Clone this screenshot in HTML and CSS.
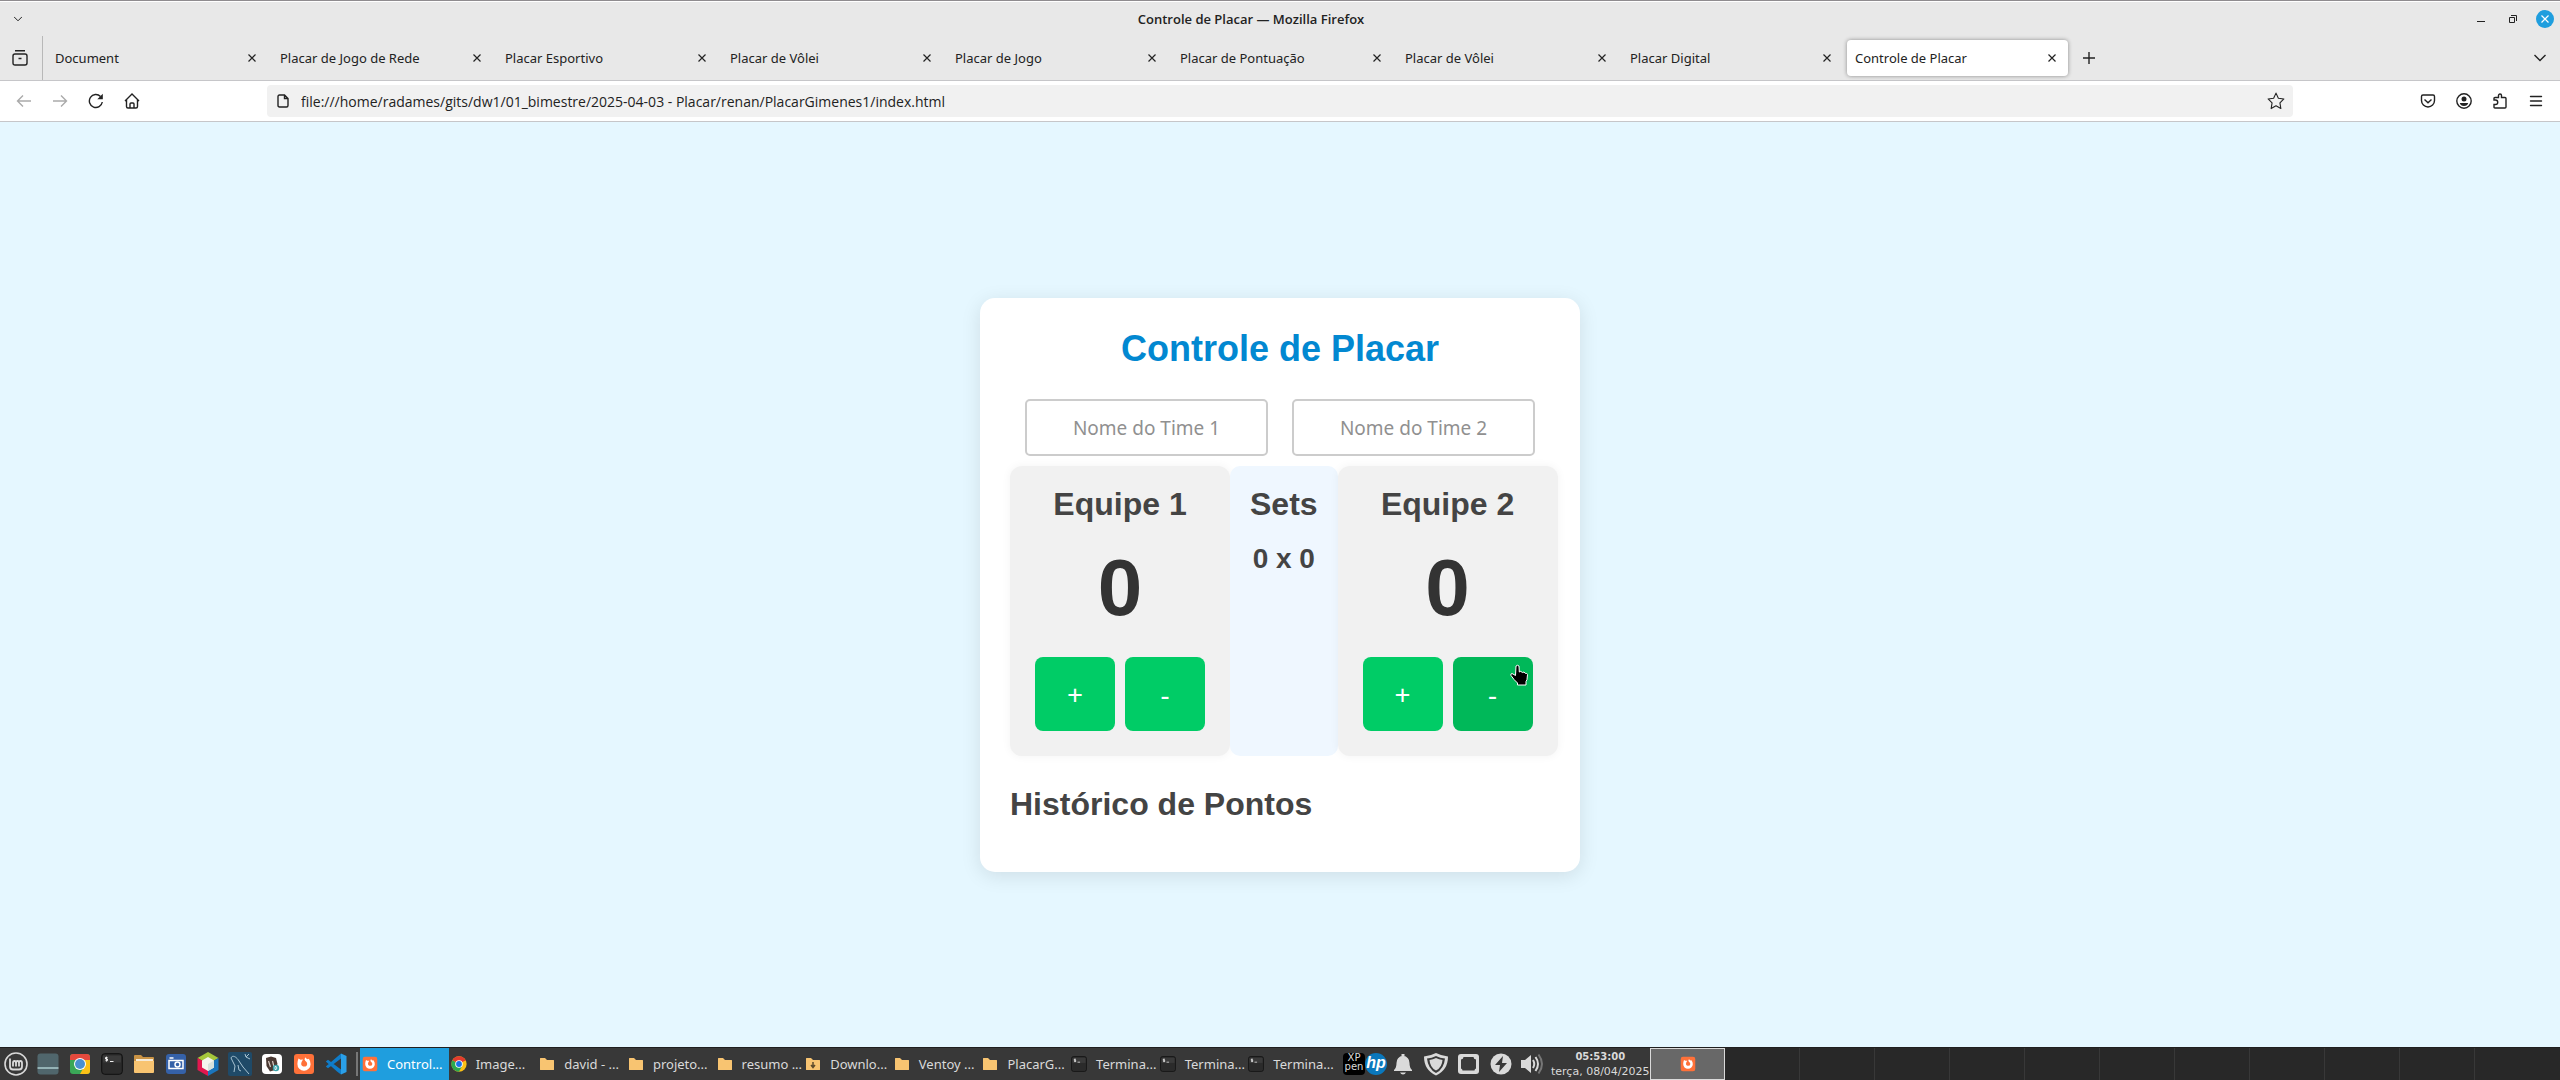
FILE: index.html
```
<!DOCTYPE html>
<html lang="pt-BR">
<head>
<meta charset="utf-8">
<title>Controle de Placar</title>
<link rel="stylesheet" href="styles.css">
</head>
<body>
<svg class="sprite" aria-hidden="true">
  <symbol id="x" viewBox="0 0 8 8"><path d="M.5.5l7 7M7.500.5l-7 7" fill="none" stroke="currentColor" stroke-width="1.200"/></symbol>
  <symbol id="folder" viewBox="0 0 16 16"><path d="M1 2.500q0-.5.5-.5H6l2 2h6.500q.5 0 .5.500v9q0 .5-.5.500h-13q-.5 0-.5-.5z" fill="#f8c471"/></symbol>
  <symbol id="term" viewBox="0 0 22 22"><rect x=".7" y=".7" width="20.600" height="20.600" rx="3" fill="#2b2b2b" stroke="#101010"/><path d="M2 2.500h18v7H2z" fill="#3a3a3a"/><path d="M6.500 4.500H4.500v1.500h2v1.600h-2M5.500 3.700v4.800M9 8.500h3.500" stroke="#eee" fill="none"/></symbol>
  <symbol id="fox" viewBox="0 0 22 22"><rect x="1" y="1" width="20" height="20" rx="3" fill="#ff7139"/><path d="M5.500 5.500l2 1.200 2.500-.2L8.600 9q-1.300 3.500 1.600 4.500 3.800.5 4-2.500 0-2-2-3.200-1.500-1.500.2-3.600.5 1.500 2.400 2l1-.5q2 2.500 1.800 5.500A6.600 6.600 0 0 1 4.400 11q0-3 1.100-5.500z" fill="#fff"/></symbol>
  <symbol id="chrome" viewBox="0 0 22 22"><circle cx="11" cy="11" r="10.500" fill="#fbc116"/><path d="M11 11L1.900 5.700A10.500 10.500 0 0 1 20.100 5.700z" fill="#e33b2e"/><path d="M11 11L1.900 5.700A10.500 10.500 0 0 0 11 21.500l4.500-8z" fill="#2da94f"/><path d="M11 6h9.200" stroke="#e33b2e" stroke-width="1"/><circle cx="11" cy="11" r="5.200" fill="#fff"/><circle cx="11" cy="11" r="4" fill="#1a73e8"/></symbol>
</svg>

<header class="titlebar">
  <button class="icon-btn" aria-label="Menu da janela"><svg width="8" height="6" viewBox="0 0 8 6"><path d="M0 .8l4 4 4-4" class="ln"/></svg></button>
  <span class="window-title">Controle de Placar — Mozilla Firefox</span>
  <span class="window-controls">
    <button class="icon-btn" aria-label="Minimizar"><svg width="8" height="12" viewBox="0 0 8 12"><path d="M0 8.500h8" class="ln"/></svg></button>
    <button class="icon-btn" aria-label="Restaurar"><svg width="8" height="8" viewBox="0 0 8 8"><path d="M.5 2.500h5v5h-5zM2 .5h5.500V6" class="ln"/></svg></button>
    <button class="icon-btn close" aria-label="Fechar"><svg width="8" height="8"><use href="#x"/></svg></button>
  </span>
</header>

<nav class="tabs" aria-label="Abas">
  <button class="icon-btn shelf" aria-label="Visualização"><svg width="16" height="16" viewBox="0 0 16 16"><path d="M3 .8h10M1 6q0-2 2-2h10q2 0 2 2v7q0 2-2 2H3q-2 0-2-2zM6.500 8.500h3" class="ln bold"/></svg></button>
  <div class="tab"><a href="#">Document</a><button class="icon-btn" aria-label="Fechar aba"><svg width="8" height="8"><use href="#x"/></svg></button></div>
  <div class="tab"><a href="#">Placar de Jogo de Rede</a><button class="icon-btn" aria-label="Fechar aba"><svg width="8" height="8"><use href="#x"/></svg></button></div>
  <div class="tab"><a href="#">Placar Esportivo</a><button class="icon-btn" aria-label="Fechar aba"><svg width="8" height="8"><use href="#x"/></svg></button></div>
  <div class="tab"><a href="#">Placar de Vôlei</a><button class="icon-btn" aria-label="Fechar aba"><svg width="8" height="8"><use href="#x"/></svg></button></div>
  <div class="tab"><a href="#">Placar de Jogo</a><button class="icon-btn" aria-label="Fechar aba"><svg width="8" height="8"><use href="#x"/></svg></button></div>
  <div class="tab"><a href="#">Placar de Pontuação</a><button class="icon-btn" aria-label="Fechar aba"><svg width="8" height="8"><use href="#x"/></svg></button></div>
  <div class="tab"><a href="#">Placar de Vôlei</a><button class="icon-btn" aria-label="Fechar aba"><svg width="8" height="8"><use href="#x"/></svg></button></div>
  <div class="tab"><a href="#">Placar Digital</a><button class="icon-btn" aria-label="Fechar aba"><svg width="8" height="8"><use href="#x"/></svg></button></div>
  <div class="tab active"><a href="#">Controle de Placar</a><button class="icon-btn" aria-label="Fechar aba"><svg width="8" height="8"><use href="#x"/></svg></button></div>
  <button class="icon-btn" aria-label="Nova aba"><svg width="12" height="12" viewBox="0 0 12 12"><path d="M6 0v12M0 6h12" class="ln bold"/></svg></button>
  <button class="icon-btn all-tabs" aria-label="Listar abas"><svg width="12" height="8" viewBox="0 0 12 8"><path d="M.5 1l5.500 5.500L11.500 1" class="ln bold"/></svg></button>
</nav>

<div class="toolbar">
  <div class="tool-group">
    <button class="icon-btn dim" aria-label="Voltar"><svg width="16" height="16" viewBox="0 0 16 16"><path d="M15 8H1.500M7 2.500L1.500 8 7 13.500" class="ln bold"/></svg></button>
    <button class="icon-btn dim" aria-label="Avançar"><svg width="16" height="16" viewBox="0 0 16 16"><path d="M1 8h13.500M9 2.500L14.500 8 9 13.500" class="ln bold"/></svg></button>
    <button class="icon-btn" aria-label="Recarregar"><svg width="16" height="16" viewBox="0 0 16 16"><path d="M14.300 9A6.500 6.500 0 1 1 12.500 3.400" class="ln bold"/><path d="M14.800.8v5.500H9.300z" fill="currentColor"/></svg></button>
    <button class="icon-btn" aria-label="Página inicial"><svg width="16" height="16" viewBox="0 0 16 16"><path d="M1 8l7-7 7 7M2.500 6.800V13.500q0 1.500 1.500 1.500h8q1.500 0 1.500-1.500V6.800M6 15v-4q0-1 1-1h2q1 0 1 1v4" class="ln bold"/></svg></button>
  </div>
  <div class="urlbar">
    <svg width="12" height="14" viewBox="0 0 12 14"><path d="M1 2.500Q1 1 2.500 1h5L11 4.500v7q0 1.500-1.500 1.500h-7Q1 13 1 11.500zM7.500 1v3.500H11" class="ln bold"/></svg>
    <input type="text" aria-label="Endereço" value="file:///home/radames/gits/dw1/01_bimestre/2025-04-03 - Placar/renan/PlacarGimenes1/index.html">
    <button class="icon-btn" aria-label="Favoritar"><svg width="18" height="18" viewBox="0 0 16 16"><path d="M8 1l2.100 4.500 4.900.7-3.500 3.500.8 5L8 12.300l-4.300 2.400.8-5L1 6.200l4.900-.7z" class="ln" stroke-linejoin="round"/></svg></button>
  </div>
  <div class="tool-group right">
    <button class="icon-btn" aria-label="Pocket"><svg width="16" height="16" viewBox="0 0 16 16"><path d="M1.500 3.500q0-1.500 1.500-1.500h10q1.500 0 1.500 1.500v4a6.500 6.500 0 0 1-13 0zM4.500 6.500L8 9.800l3.500-3.300" class="ln bold"/></svg></button>
    <button class="icon-btn" aria-label="Conta"><svg width="16" height="16" viewBox="0 0 16 16"><circle cx="8" cy="8" r="7.200" class="ln bold"/><circle cx="8" cy="6" r="2.500" fill="currentColor"/><path d="M3.800 10h8.400q-.7 3-4.200 3t-4.200-3z" fill="currentColor"/></svg></button>
    <button class="icon-btn" aria-label="Extensões"><svg width="16" height="16" viewBox="0 0 16 16"><path d="M2 7V5.500q0-1 1-1h3.500V2.500a1.500 1.500 0 0 1 3 0v2H13q1 0 1 1V14q0 1-1 1H3q-1 0-1-1v-2.500h1.500a2.200 2.200 0 0 0 0-4.500z" class="ln bold"/></svg></button>
    <button class="icon-btn" aria-label="Menu"><svg width="16" height="16" viewBox="0 0 16 16"><path d="M2.500 3.500h11M2.500 8h11M2.500 12.500h11" class="ln bold" stroke-linecap="round"/></svg></button>
  </div>
</div>

<main class="page">
  <section class="card">
    <h1>Controle de Placar</h1>
    <div class="names">
      <input type="text" placeholder="Nome do Time 1" aria-label="Nome do Time 1">
      <input type="text" placeholder="Nome do Time 2" aria-label="Nome do Time 2">
    </div>
    <div class="board">
      <div class="team">
        <h2>Equipe 1</h2>
        <p class="score">0</p>
        <div class="points"><button>+</button><button>-</button></div>
      </div>
      <div class="sets">
        <h2>Sets</h2>
        <p>0 x 0</p>
      </div>
      <div class="team">
        <h2>Equipe 2</h2>
        <p class="score">0</p>
        <div class="points">
          <button>+</button>
          <button class="hovered">-<svg class="pointer" width="20" height="22" viewBox="0 0 20 22"><path d="M7 2q1.500-1.500 3 0l.3 6 1.500-.7 1.500 1.200 1.700-.5 1.200 1.300 1.600.2.700 1-.5 5-1 2V21H8.500v-2L5 15.500l-3-4q-.8-1.600 1-2l3.500 2z" fill="#000" stroke="#fff" stroke-width="1"/></svg></button>
        </div>
      </div>
    </div>
    <h2 class="history">Histórico de Pontos</h2>
  </section>
</main>

<footer class="taskbar">
  <div class="launchers">
    <button class="icon-btn" aria-label="Menu"><svg width="24" height="24" viewBox="0 0 24 24"><circle cx="12" cy="12" r="11" fill="none" stroke="#d8d8d8" stroke-width="1.600"/><path d="M6 6.500v8q0 3 3 3h6q3 0 3-3V11q0-2-1.500-2T15 11v3.500M15 11q0-2-1.500-2T12 11v3.500M12 11q0-2-1.500-2T9 11v3.500" fill="none" stroke="#d8d8d8" stroke-width="1.800"/></svg></button>
    <button class="icon-btn" aria-label="Área de trabalho"><svg width="22" height="22" viewBox="0 0 22 22"><rect x=".5" y=".5" width="21" height="21" rx="3" fill="#50666c"/><path d="M.5 15h21" stroke="#d9ffff"/></svg></button>
    <button class="icon-btn" aria-label="Chrome"><svg width="22" height="22" viewBox="0 0 22 22"><rect x="1" y="1" width="20" height="20" rx="3" fill="#3aa757"/><path d="M1 7V4q0-3 3-3h14q3 0 3 3v3z" fill="#e5493d"/><path d="M11 7h10v11q0 3-3 3h-7l5-9z" fill="#fbc116"/><circle cx="11" cy="11" r="6" fill="#fff"/><circle cx="11" cy="11" r="5" fill="#4a90d0"/></svg></button>
    <button class="icon-btn" aria-label="Terminal"><svg width="22" height="22"><use href="#term"/></svg></button>
    <button class="icon-btn" aria-label="Arquivos"><svg width="22" height="22" viewBox="0 0 22 22"><path d="M1 3q0-1 1-1h6l2 2h10q1 0 1 1v14H1z" fill="#c99345"/><path d="M3 6h17v4H3z" fill="#f5ead7"/><path d="M1 8h20v11q0 1-1 1H2q-1 0-1-1z" fill="#f8c471"/></svg></button>
    <button class="icon-btn" aria-label="Captura de tela"><svg width="22" height="22" viewBox="0 0 22 22"><rect x="1" y="1" width="20" height="20" rx="3" fill="#3561a8"/><path d="M4 7.500h14v8H4z" fill="none" stroke="#fff" stroke-width="1.500"/><path d="M4.500 5h4" stroke="#fff" stroke-width="1.500"/><circle cx="12.500" cy="11.500" r="2.500" fill="none" stroke="#fff" stroke-width="1.500"/></svg></button>
    <button class="icon-btn" aria-label="NetBeans"><svg width="22" height="24" viewBox="0 0 22 24"><path d="M11 0l10.500 6L11 12 .5 6z" fill="#a5c73b"/><path d="M.5 6L11 12v12L.5 18z" fill="#e2174f"/><path d="M21.500 6L11 12v12l10.500-6z" fill="#1b75bc"/><path d="M11 5l6 3.500v7L11 19l-6-3.500v-7z" fill="#f4f4ee"/><path d="M11 12l6-3.500v7L11 19z" fill="#d7e2dc"/></svg></button>
    <button class="icon-btn" aria-label="MySQL Workbench"><svg width="24" height="24" viewBox="0 0 24 24"><rect width="24" height="24" rx="2" fill="#1f4a68"/><path d="M6 20l1-6-4-8c1-3 5-2 8 3l4 6 6 7M10 13l1 5 2 1M17 2l1 3 4 2M18 5l3-3" fill="none" stroke="#a9c4d3" stroke-width="1"/></svg></button>
    <button class="icon-btn" aria-label="DBeaver"><svg width="22" height="22" viewBox="0 0 22 22"><rect x="1" y="1" width="20" height="20" rx="4" fill="#fff"/><path d="M5 5l5-1.500 5 1.500 1.500 6-2.500 6-5 1.500L5.500 13z" fill="#4a3933"/><path d="M7.500 8l2 6M11.500 8l1.500 6" stroke="#d8cbc4" stroke-width="1.200"/><circle cx="15" cy="15" r="3.200" fill="#39a0a8"/><path d="M14 13.500h1.200q1.300 1.500 0 3H14z" fill="none" stroke="#fff" stroke-width=".8"/></svg></button>
    <button class="icon-btn" aria-label="Firefox"><svg width="22" height="22"><use href="#fox"/></svg></button>
    <button class="icon-btn" aria-label="VS Code"><svg width="22" height="22" viewBox="0 0 22 22"><path d="M16 .5L21.500 3v16L16 21.500z" fill="#2a9fe8"/><path d="M16 5.500v11L3 6.800.8 8.500 12 18.500l4 3M16 .5L.8 13.500 3 15.200 16 5.500z" fill="#0f7cc9"/></svg></button>
  </div>
  <div class="windows">
    <button class="task current"><svg width="16" height="16"><use href="#fox"/></svg>Control...</button>
    <button class="task"><svg width="16" height="16"><use href="#chrome"/></svg>Image...</button>
    <button class="task"><svg width="16" height="16"><use href="#folder"/></svg>david - ...</button>
    <button class="task"><svg width="16" height="16"><use href="#folder"/></svg>projeto...</button>
    <button class="task"><svg width="16" height="16"><use href="#folder"/></svg>resumo ...</button>
    <button class="task"><svg width="16" height="16" viewBox="0 0 16 16"><use href="#folder"/><path d="M8 6v5M6 9l2 2.500L10 9" fill="none" stroke="#5c4a2c" stroke-width="1.500"/></svg>Downlo...</button>
    <button class="task"><svg width="16" height="16"><use href="#folder"/></svg>Ventoy ...</button>
    <button class="task"><svg width="16" height="16"><use href="#folder"/></svg>PlacarG...</button>
    <button class="task"><svg width="16" height="16"><use href="#term"/></svg>Termina...</button>
    <button class="task"><svg width="16" height="16"><use href="#term"/></svg>Termina...</button>
    <button class="task"><svg width="16" height="16"><use href="#term"/></svg>Termina...</button>
  </div>
  <div class="tray">
    <span class="xppen">XP<br>pen</span>
    <span class="hp">hp</span>
    <svg width="32" height="22" viewBox="0 0 32 22"><path d="M7 17q2.500-2 2.500-7 0-6 6.500-7.500Q22.500 4 22.500 10q0 5 2.500 7v1H7zM13 19.500h6q-1 2-3 2t-3-2zM14.500 1h3v3h-3z" fill="#dadada"/></svg>
    <svg width="34" height="24" viewBox="0 0 34 24"><path d="M17 1q6 3 12 3.500Q29 18 17 23.500 5 18 5 4.500 11 4 17 1z" fill="#dadada"/><path d="M17 4q4 2 9 2.500Q25 17 17 21 9 17 8 6.500 13 6 17 4z" fill="#3a3a3a"/><path d="M17 6q3 1.500 6.500 2Q23 15.500 17 18.500q-6-3-6.500-10.500 3.500-.5 6.500-2z" fill="#dadada"/></svg>
    <svg width="32" height="22" viewBox="0 0 32 22"><rect x="5" y="1" width="21" height="20" rx="3" fill="#dadada"/><path d="M10.500 4h10q0 2 2.500 2.500v9q-1.500.5-1.500 2h-12q0-1.500-1.500-2v-9Q10.500 6 10.500 4z" fill="#3a3a3a"/></svg>
    <svg width="32" height="22" viewBox="0 0 32 22"><circle cx="16" cy="11" r="10.500" fill="#dadada"/><path d="M18 3l-8 9h5l-1 7 8-9h-5z" fill="#383838"/></svg>
    <svg width="34" height="22" viewBox="0 0 34 22"><path d="M4 7h4l6-5v18l-6-5H4z" fill="#dadada"/><path d="M16 7q2.500 4 0 8M18.500 4q5 7 0 14" stroke="#dadada" stroke-width="2" fill="none"/><path d="M21.500 1.500q7 9.500 0 19" stroke="#777" stroke-width="2" fill="none"/></svg>
    <div class="clock"><b>05:53:00</b><span>terça, 08/04/2025</span></div>
  </div>
  <div class="workspaces">
    <button class="shown" aria-label="Área 1"><svg width="16" height="16"><use href="#fox"/></svg></button>
    <button aria-label="Área 2"></button><button aria-label="Área 3"></button><button aria-label="Área 4"></button><button aria-label="Área 5"></button><button aria-label="Área 6"></button><button aria-label="Área 7"></button><button aria-label="Área 8"></button><button aria-label="Área 9"></button><button aria-label="Área 10"></button><button aria-label="Área 11"></button><button aria-label="Área 12"></button>
  </div>
</footer>
</body>
</html>
```
FILE: styles.css
```
* { box-sizing: border-box; }

body {
  margin: 0;
  min-height: 100vh;
  display: flex;
  flex-direction: column;
  font-family: "Noto Sans", sans-serif;
  font-size: 13px;
  color: #222;
}

button, input { font: inherit; color: inherit; margin: 0; }
svg { display: block; flex: none; }
.sprite { display: none; }

.ln { fill: none; stroke: currentColor; stroke-width: 1; }
.ln.bold { stroke-width: 1.4; }

.icon-btn {
  display: flex;
  align-items: center;
  justify-content: center;
  flex: none;
  padding: 0;
  border: 0;
  background: none;
}

/* Window title */
.titlebar {
  display: grid;
  grid-template-columns: 88px 1fr 88px;
  align-items: center;
  height: 36px;
  border-top: 1px solid #8f8c8f;
  background: #e8e8e8;
  box-shadow: inset 0 1px #fff;
}
.titlebar > .icon-btn { width: 36px; }
.window-title {
  padding-right: 58px;
  text-align: center;
  font-family: "Open Sans", sans-serif;
  font-weight: 600;
}
.window-controls { display: flex; gap: 14px; }
.window-controls .icon-btn { width: 18px; height: 18px; }
.window-controls .close { border-radius: 50%; background: #1f9ede; color: #fff; }

/* Tabs */
.tabs {
  display: flex;
  align-items: center;
  gap: 4px;
  height: 45px;
  padding-right: 12px;
  background: #e8e8e8;
  border-bottom: 1px solid #c6c6c9;
}
.shelf {
  width: 43px;
  height: 44px;
  padding-right: 2px;
  border-right: 1px solid #b8b8b8;
}
.tab {
  display: flex;
  align-items: center;
  flex: 0 1 221px;
  min-width: 0;
  height: 36px;
  padding: 0 4px 0 8px;
  border-radius: 4px;
}
.tab a {
  flex: 1;
  overflow: hidden;
  white-space: nowrap;
  color: inherit;
  text-decoration: none;
}
.tab .icon-btn { width: 24px; height: 24px; }
.tab.active { background: #fff; box-shadow: 0 0 4px #00000066; }
.tabs > .icon-btn:not(.shelf) { width: 34px; height: 36px; }
.tabs > .icon-btn.all-tabs:not(.shelf) { width: 16px; margin-left: auto; }

/* Toolbar */
.toolbar {
  display: flex;
  align-items: center;
  height: 41px;
  background: #fff;
  border-bottom: 1px solid #c6c6c9;
}
.tool-group { display: flex; flex: none; width: 267px; padding-left: 6px; }
.tool-group.right { padding: 0 6px; justify-content: flex-end; }
.tool-group .icon-btn { width: 36px; height: 32px; }
.icon-btn.dim { color: #aaa; }
.urlbar {
  display: flex;
  align-items: center;
  flex: 1;
  gap: 12px;
  height: 32px;
  padding: 0 8px 0 10px;
  border-radius: 4px;
  background: #f1f1f1;
}
.urlbar input {
  flex: 1;
  min-width: 0;
  padding: 0;
  border: 0;
  background: none;
  font-family: "Open Sans", sans-serif;
  font-size: 14px;
}

/* Scoreboard page */
.page {
  flex: 1;
  display: flex;
  align-items: center;
  justify-content: center;
  background: #e5f7ff;
  font-family: "Liberation Sans", Arial, sans-serif;
}
.card {
  width: 600px;
  padding: 30px;
  border-radius: 15px;
  background: #fff;
  box-shadow: 0 4px 20px #0000001a;
}
.card h1 {
  margin: 0 0 30px;
  text-align: center;
  font-size: 36px;
  line-height: 41px;
  color: #0288d1;
}
.card h2 {
  margin: 0 0 20px;
  font-size: 32px;
  line-height: 36px;
  color: #444;
}
.names { display: flex; justify-content: center; gap: 24px; margin-bottom: 10px; }
.names input {
  width: 243px;
  height: 57px;
  padding: 2px 12px 0;
  border: 2px solid #ccc;
  border-radius: 5px;
  text-align: center;
  font-family: "Noto Sans", sans-serif;
  font-size: 19px;
}
.names input::placeholder { color: #909090; }

.board { display: flex; text-align: center; }
.team {
  flex: none;
  padding: 20px 25px 25px;
  border-radius: 12px;
  background: #f1f1f1;
  box-shadow: 0 0 10px #0000000d;
}
.score {
  margin: 0 0 24px;
  font-size: 80px;
  line-height: 91px;
  font-weight: bold;
  color: #333;
}
.points { display: flex; gap: 10px; }
.points button {
  width: 80px;
  height: 74px;
  padding: 0;
  border: 0;
  border-radius: 8px;
  background: #00cc66;
  color: #fff;
  font-family: "Noto Sans", sans-serif;
  font-size: 28px;
}
.points .hovered { position: relative; background: #00b859; }
.pointer { position: absolute; top: 7px; right: 4px; }
.sets { flex: none; padding: 20px; border-radius: 10px; background: #eff7ff; }
.sets p {
  margin: 0;
  font-size: 28px;
  line-height: 34px;
  font-weight: bold;
  color: #444;
}
.card .history { margin: 30px 0 20px; }

/* Panel */
.taskbar {
  display: flex;
  align-items: center;
  height: 33px;
  border-top: 1px solid #1f1f1f;
  background: #383838;
  color: #dadada;
}
.launchers {
  display: flex;
  flex: none;
  margin-right: 2px;
  padding-right: 4px;
  border-right: 2px solid #777;
}
.launchers .icon-btn { width: 32px; height: 24px; }
.windows {
  display: grid;
  grid-template-columns: repeat(11, 1fr);
  flex: 0 1 975px;
  min-width: 0;
}
.task {
  display: flex;
  align-items: center;
  gap: 9px;
  height: 32px;
  padding: 0 0 0 2px;
  overflow: hidden;
  white-space: nowrap;
  border: 0;
  background: none;
}
.task.current { background: #1f9ede; color: #fff; }
.tray { display: flex; align-items: center; flex: none; padding-left: 8px; }
.xppen, .hp { width: 22px; height: 22px; text-align: center; }
.xppen {
  border-radius: 4px;
  background: #000;
  font: 10px/9px "DejaVu Sans", sans-serif;
}
.hp {
  border-radius: 50%;
  background: #0a78bd;
  color: #fff;
  font: italic bold 16px/19px "Liberation Sans", sans-serif;
}
.clock {
  display: grid;
  width: 98px;
  justify-items: center;
  white-space: nowrap;
  font-family: "DejaVu Sans", sans-serif;
  font-size: 11px;
  line-height: 15px;
}
.clock b { font-size: 10px; }
.workspaces { display: flex; flex: 1; margin-left: 1px; height: 32px; background: #282828; }
.workspaces button {
  flex: 0 1 75px;
  padding: 0;
  border: 0;
  border-right: 1px solid #383838;
  background: none;
}
.workspaces button:last-child { border: 0; }
.workspaces .shown {
  display: flex;
  align-items: center;
  justify-content: center;
  border: 1px solid #dadada;
  background: #686868;
}
```
